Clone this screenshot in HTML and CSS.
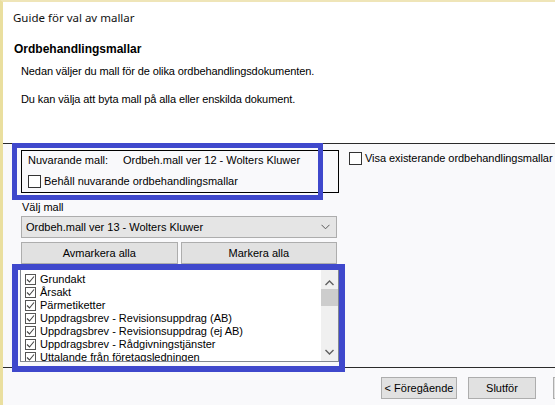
FILE: index.html
```html
<!DOCTYPE html>
<html lang="sv">
<head>
<meta charset="utf-8">
<title>Guide för val av mallar</title>
<link rel="stylesheet" href="styles.css">
</head>
<body>
<div class="window">
  <div class="header">
    <div class="title">Guide för val av mallar</div>
    <div class="heading">Ordbehandlingsmallar</div>
    <p class="desc first">Nedan väljer du mall för de olika ordbehandlingsdokumenten.</p>
    <p class="desc">Du kan välja att byta mall på alla eller enskilda dokument.</p>
  </div>
  <div class="sep"></div>
  <div class="content">
    <div class="top-row">
      <div class="groupbox">
        <div class="current"><span class="lbl">Nuvarande mall:</span><span>Ordbeh.mall ver 12 - Wolters Kluwer</span></div>
        <div class="check"><span class="box"></span><span>Behåll nuvarande ordbehandlingsmallar</span></div>
      </div>
      <div class="check visa"><span class="box"></span><span>Visa existerande ordbehandlingsmallar</span></div>
    </div>
    <div class="field-label">Välj mall</div>
    <div class="combo">
      <span>Ordbeh.mall ver 13 - Wolters Kluwer</span>
      <svg class="chev" width="9" height="6" viewBox="0 0 9 6"><polyline points="0.5,0.8 4.5,4.8 8.5,0.8" fill="none" stroke="#5a5a5a" stroke-width="1"/></svg>
    </div>
    <div class="btns">
      <div class="btn wide">Avmarkera alla</div>
      <div class="btn wide">Markera alla</div>
    </div>
    <div class="list">
      <div class="items">
        <div class="item"><span class="cb"><svg width="9" height="9" viewBox="0 0 9 9"><polyline points="1,4.5 3.5,7 8,1.5" fill="none" stroke="#444" stroke-width="1.1"/></svg></span>Grundakt</div>
        <div class="item"><span class="cb"><svg width="9" height="9" viewBox="0 0 9 9"><polyline points="1,4.5 3.5,7 8,1.5" fill="none" stroke="#444" stroke-width="1.1"/></svg></span>Årsakt</div>
        <div class="item"><span class="cb"><svg width="9" height="9" viewBox="0 0 9 9"><polyline points="1,4.5 3.5,7 8,1.5" fill="none" stroke="#444" stroke-width="1.1"/></svg></span>Pärmetiketter</div>
        <div class="item"><span class="cb"><svg width="9" height="9" viewBox="0 0 9 9"><polyline points="1,4.5 3.5,7 8,1.5" fill="none" stroke="#444" stroke-width="1.1"/></svg></span>Uppdragsbrev - Revisionsuppdrag (AB)</div>
        <div class="item"><span class="cb"><svg width="9" height="9" viewBox="0 0 9 9"><polyline points="1,4.5 3.5,7 8,1.5" fill="none" stroke="#444" stroke-width="1.1"/></svg></span>Uppdragsbrev - Revisionsuppdrag (ej AB)</div>
        <div class="item"><span class="cb"><svg width="9" height="9" viewBox="0 0 9 9"><polyline points="1,4.5 3.5,7 8,1.5" fill="none" stroke="#444" stroke-width="1.1"/></svg></span>Uppdragsbrev - Rådgivningstjänster</div>
        <div class="item"><span class="cb"><svg width="9" height="9" viewBox="0 0 9 9"><polyline points="1,4.5 3.5,7 8,1.5" fill="none" stroke="#444" stroke-width="1.1"/></svg></span>Uttalande från företagsledningen</div>
      </div>
      <div class="scrollbar">
        <svg class="arrow up" width="17" height="16" viewBox="0 0 17 16"><polyline points="4.5,10 8.5,6 12.5,10" fill="none" stroke="#606060" stroke-width="1.4"/></svg>
        <div class="thumb"></div>
        <div class="track"></div>
        <svg class="arrow down" width="17" height="16" viewBox="0 0 17 16"><polyline points="4.5,6 8.5,10 12.5,6" fill="none" stroke="#606060" stroke-width="1.4"/></svg>
      </div>
    </div>
  </div>
  <div class="sep"></div>
  <div class="footer">
    <div class="btn prev">&lt; Föregående</div>
    <div class="btn finish">Slutför</div>
    <div class="btn extra"></div>
  </div>
  <div class="annot a1"></div>
  <div class="annot a2"></div>
</div>
</body>
</html>
```

FILE: styles.css
```css
html, body {
  margin: 0;
  padding: 0;
}
body {
  width: 555px;
  height: 405px;
  overflow: hidden;
  background: #f9f9fb;
  font-family: "Liberation Sans", Arial, sans-serif;
  font-size: 11px;
  color: #000;
}
.window {
  position: relative;
  height: 403px;
  border-top: 2px solid #efe5b8;
  border-left: 3px solid #eadf9f;
  background: #f9f9fb;
  overflow: hidden;
}
.header {
  height: 141px;
  background: #fff;
  padding-left: 10px;
  overflow: hidden;
}
.title {
  font-family: "Noto Sans", "Liberation Sans", sans-serif;
  font-size: 11.5px;
  line-height: 16px;
  margin-top: 8px;
  color: #111;
}
.heading {
  font-weight: bold;
  font-size: 12px;
  line-height: 14px;
  margin-top: 16px;
  padding-left: 1px;
}
.desc {
  margin: 0;
  padding-left: 8px;
  line-height: 14px;
  margin-top: 14px;
  letter-spacing: -0.1px;
}
.desc.first {
  margin-top: 8px;
}
.sep {
  height: 1px;
  background: #2b2b2b;
}
.content {
  height: 223px;
  padding-left: 18px;
  padding-top: 6px;
  box-sizing: border-box;
}
.top-row {
  display: flex;
  align-items: flex-start;
}
.groupbox {
  border: 1px solid #000;
  padding: 2px 0 0 6px;
  box-sizing: border-box;
  height: 43px;
  width: 318px;
  flex: none;
}
.current {
  display: flex;
  line-height: 14px;
}
.lbl {
  width: 95px;
}
.check {
  display: flex;
  align-items: center;
  gap: 3px;
  line-height: 14px;
  margin-top: 7px;
  white-space: nowrap;
}
.box {
  width: 11px;
  height: 11px;
  border: 1px solid #333;
  background: #fff;
  flex: none;
}
.visa {
  margin-left: 10px;
  margin-top: 1px;
  letter-spacing: -0.05px;
}
.field-label {
  margin-top: 7px;
  line-height: 14px;
  padding-left: 1px;
}
.combo {
  margin-top: 2px;
  width: 316px;
  height: 22px;
  box-sizing: border-box;
  border: 1px solid #adadad;
  background: #e5e5e5;
  display: flex;
  align-items: center;
  justify-content: space-between;
  padding: 0 6px 0 4px;
}
.chev {
  display: block;
}
.btns {
  display: flex;
  gap: 3px;
  margin-top: 4px;
  width: 316px;
}
.btn {
  height: 22px;
  box-sizing: border-box;
  border: 1px solid #adadad;
  background: #e1e1e1;
  display: flex;
  align-items: center;
  justify-content: center;
  line-height: 14px;
  white-space: nowrap;
  flex: none;
}
.btn.wide {
  flex: 1;
}
.list {
  margin-top: 4px;
  margin-left: -1px;
  width: 319px;
  height: 94px;
  box-sizing: border-box;
  border: 1px solid #828790;
  background: #fff;
  display: flex;
}
.items {
  flex: 1;
  padding: 4px 0 0 4px;
  overflow: hidden;
}
.item {
  display: flex;
  align-items: center;
  height: 13px;
  line-height: 13px;
  white-space: nowrap;
  font-size: 11px;
}
.cb {
  width: 9px;
  height: 9px;
  border: 1px solid #555;
  background: #fff;
  margin-right: 4px;
  flex: none;
  display: flex;
}
.cb svg {
  display: block;
}
.scrollbar {
  width: 17px;
  background: #f0f0f0;
  display: flex;
  flex-direction: column;
}
.arrow {
  display: block;
  flex: none;
}
.arrow.up {
  margin-top: 6px;
}
.arrow.down {
  margin-bottom: 1px;
}
.thumb {
  height: 17px;
  margin-top: -2px;
  background: #cdcdcd;
  flex: none;
}
.track {
  flex: 1;
}
.footer {
  display: flex;
  padding-top: 9px;
  padding-left: 378px;
  gap: 11px;
}
.btn.prev {
  width: 76px;
}
.btn.finish {
  width: 68px;
}
.btn.extra {
  width: 2px;
  border-right: none;
  margin-left: 6px;
}
.annot {
  position: absolute;
  border-style: solid;
  border-color: #3f48cc;
  box-sizing: border-box;
}
.a1 {
  left: 9px;
  top: 141px;
  width: 311px;
  height: 57px;
  border-width: 5px;
}
.a2 {
  left: 9px;
  top: 262px;
  width: 333px;
  height: 108px;
  border-width: 6px;
}
```
